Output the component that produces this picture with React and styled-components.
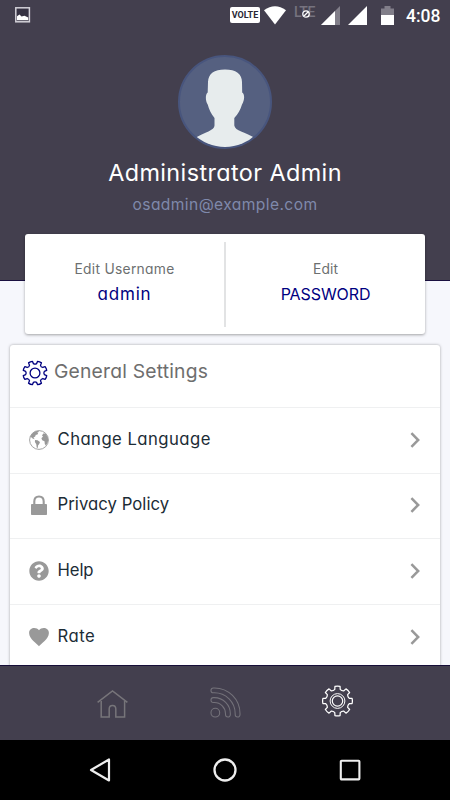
import React from "react";
import styled, { createGlobalStyle } from "styled-components";
import { FaQuestionCircle } from "react-icons/fa";

const rows = [
  { label: "Change Language", icon: <GlobeIcon />, spacing: 0.45 },
  { label: "Privacy Policy", icon: <LockIcon />, spacing: 0.05 },
  { label: "Help", icon: <FaQuestionCircle size={20} />, spacing: -0.1 },
  { label: "Rate", icon: <HeartIcon />, spacing: 0.5 },
];

// Outline of an eight-toothed gear centred on 0,0
function gearPath(outer, root, offset) {
  const point = (r, deg) => {
    const a = (deg * Math.PI) / 180;
    return `${(r * Math.cos(a)).toFixed(2)} ${(r * Math.sin(a)).toFixed(2)}`;
  };
  let d = "";
  for (let i = 0; i < 8; i++) {
    const a = i * 45 + offset;
    d += `${i === 0 ? "M" : "L"}${point(root, a - 13)}`;
    d += `L${point(outer, a - 10)}`;
    d += `Q${point(outer + 0.4, a)} ${point(outer, a + 10)}`;
    d += `L${point(root, a + 13)}`;
    d += `Q${point(root - 1.2, a + 22.5)} ${point(root, a + 32)}`;
  }
  return d + "Z";
}

function GlobeIcon() {
  return (
    <svg width="20" height="20" viewBox="0 0 20 20" fill="#999">
      <circle cx="10" cy="10" r="9.4" fill="none" stroke="#999" strokeWidth="0.9" />
      <path d="M1 7L3.5 3.2 6 1.4 9.2.8 10 2 8.3 2.6 9.2 3.8 8 4.8 6.8 4.8 6.2 6.5 4.5 7.6 5.7 9.3 3.6 8.6 2.2 7.2Z" />
      <path d="M6 10L8.5 10.3 11 12 10.2 14 9 15.5 8.8 18 7.7 17.5 7.3 14.3 5.9 12Z" />
      <path d="M13 5.6L14.3 3.4 16.5 3.6 18.8 7 19.2 10.5 18.2 13.5 16.8 15.6 15.8 14 15.5 11.2 13.2 10.3 12.4 8.2 14 6.5Z" />
    </svg>
  );
}

function LockIcon() {
  return (
    <svg width="20" height="20" viewBox="0 0 20 20">
      <path d="M5.3 10V6.5Q5.3 1.5 10 1.5T14.7 6.5V10" fill="none" stroke="#999" strokeWidth="2.1" />
      <rect x="2" y="9" width="16" height="11" rx="0.8" fill="#999" />
    </svg>
  );
}

function HeartIcon() {
  return (
    <svg width="20" height="20" viewBox="0 0 20 20">
      <path
        d="M10 19.2C8.2 16.8.1 12.2.1 6 .1.3 7.3-.5 10 3.2 12.7-.5 19.9.3 19.9 6 19.9 12.2 11.8 16.8 10 19.2Z"
        fill="#999"
      />
    </svg>
  );
}

function App() {
  return (
    <Screen>
      <GlobalStyle />
      <Header>
        <StatusBar>
          <svg width="16" height="16" viewBox="0 0 16 16">
            <rect x="0.8" y="0.8" width="13.6" height="14" fill="#353142" stroke="#d4d2d9" strokeWidth="1.5" />
            <path d="M2 13.2V9.2L4.5 7.4 6.5 9.4 9.5 8.8 13.2 10.5V13.2Z" fill="#fff" />
          </svg>
          <StatusIcons>
            <Volte>VOLTE</Volte>
            <WifiIcon width="22" height="19" viewBox="0 0 22 19">
              <path d="M0 4.2Q11-3.8 22 4.2L11 18.5Z" fill="#fff" />
            </WifiIcon>
            <Lte>
              LTE
              <NoData width="8" height="8" viewBox="0 0 8 8">
                <circle cx="4" cy="4" r="3.2" fill="#433f4e" stroke="#fff" strokeWidth="1.3" />
                <path d="M2 6L6 2" stroke="#fff" strokeWidth="1.2" />
              </NoData>
            </Lte>
            <SignalIcon width="19" height="19" viewBox="0 0 19 19">
              <path d="M19 0V19H0Z" fill="#817e89" />
              <path d="M14 5V19H0Z" fill="#fff" />
            </SignalIcon>
            <SecondSignal width="19" height="19" viewBox="0 0 19 19">
              <path d="M19 0V19H0Z" fill="#fff" />
            </SecondSignal>
            <BatteryIcon width="13" height="19" viewBox="0 0 13 19">
              <path d="M0 2.5H3.5V0H9.5V2.5H13V9H0Z" fill="#817e89" />
              <path d="M0 9H13V19H0Z" fill="#fff" />
            </BatteryIcon>
            <Clock>4:08</Clock>
          </StatusIcons>
        </StatusBar>
        <Avatar viewBox="0 0 94 94">
          <defs>
            <clipPath id="face">
              <circle cx="47" cy="47" r="45" />
            </clipPath>
          </defs>
          <circle cx="47" cy="47" r="46" fill="#556080" stroke="#48557d" strokeWidth="2" />
          <path
            clipPath="url(#face)"
            d="M47 14.5C58 14.5 64 19 64 27L64.2 37.5C66.8 39 66.8 45 64 49.5 62.5 55 60 59 56.3 63V70.5C57 76 67 77 77 83L76 94H18L17 83C27 77 36.5 75.5 36.5 70.5V63C33 59 31 54 29.7 49.5 27 45 27.5 39 29.7 37.5L30 27C30.5 18.5 36 14.5 47 14.5Z"
            fill="#e7eced"
          />
        </Avatar>
        <Name>Administrator Admin</Name>
        <Email>osadmin@example.com</Email>
      </Header>

      <Content>
        <AccountCard>
          <AccountCell>
            <CellLabel $spacing={0.3}>Edit Username</CellLabel>
            <CellValue $size={17} $spacing={0.8}>admin</CellValue>
          </AccountCell>
          <Divider />
          <AccountCell>
            <CellLabel $spacing={0.1}>Edit</CellLabel>
            <CellValue $size={16} $spacing={-0.1}>PASSWORD</CellValue>
          </AccountCell>
        </AccountCard>

        <SettingsCard>
          <SettingsHeading>
            <svg width="26" height="26" viewBox="-13 -13 26 26" fill="none" stroke="#000080" strokeWidth="1.3" strokeLinejoin="round">
              <path d={gearPath(12, 9.5, 22.5)} />
              <circle r="4.9" />
            </svg>
            <HeadingText>General Settings</HeadingText>
          </SettingsHeading>
          {rows.map((row) => (
            <SettingsRow key={row.label}>
              <RowIcon>{row.icon}</RowIcon>
              <RowText $spacing={row.spacing}>{row.label}</RowText>
              <svg width="10" height="16" viewBox="0 0 10 16" fill="none" stroke="#999" strokeWidth="2.5">
                <path d="M1.4 1.2L8.2 8 1.4 14.8" />
              </svg>
            </SettingsRow>
          ))}
        </SettingsCard>
      </Content>

      <TabBar>
        <Tab $offset={2}>
          <svg width="32" height="30" viewBox="0 0 32 30" fill="none" stroke="#77757a" strokeWidth="1.5">
            <path d="M0.6 13.4L15.5 2 30.4 13.4" />
            <path d="M4.2 12V28H12.2V20Q12.2 16.5 15.5 16.5T18.8 20V28H27.6V12" />
          </svg>
        </Tab>
        <Tab $offset={0}>
          <svg width="31" height="31" viewBox="0 0 32 32" fill="none" stroke="#74727a" strokeWidth="1.1">
            <circle cx="5.5" cy="26.5" r="4.5" />
            <path d="M3.5 1H4.5A26.5 26.5 0 0 1 31 27.5V28.5A2.5 2.5 0 0 1 26 28.5V27.5A21.5 21.5 0 0 0 4.5 6H3.5A2.5 2.5 0 0 1 3.5 1Z" />
            <path d="M3.5 11H4.5A16.5 16.5 0 0 1 21 27.5V28.5A2.5 2.5 0 0 1 16 28.5V27.5A11.5 11.5 0 0 0 4.5 16H3.5A2.5 2.5 0 0 1 3.5 11Z" />
          </svg>
        </Tab>
        <Tab $offset={-2}>
          <svg width="32" height="32" viewBox="-15.5 -16 32 32" fill="none" stroke="#fff" strokeWidth="1.25" strokeLinejoin="round">
            <path d={gearPath(14.8, 12, 0)} />
            <circle r="7.4" strokeWidth="1" />
            <circle r="5.2" strokeWidth="1.2" />
          </svg>
        </Tab>
      </TabBar>

      <SystemBar>
        <svg width="24" height="26" viewBox="0 0 24 26" fill="none" stroke="#eee" strokeWidth="2.2" strokeLinejoin="round">
          <path d="M3 13L21 2.5V23.5Z" />
        </svg>
        <svg width="24" height="24" viewBox="0 0 24 24" fill="none" stroke="#eee" strokeWidth="2.3">
          <circle cx="12" cy="12" r="10.5" />
        </svg>
        <svg width="24" height="24" viewBox="0 0 24 24" fill="none" stroke="#eee" strokeWidth="2.1">
          <rect x="2.8" y="2.8" width="18.6" height="18.6" rx="0.8" />
        </svg>
      </SystemBar>
    </Screen>
  );
}

export default App;

const GlobalStyle = createGlobalStyle`
  * {
    box-sizing: border-box;
  }
  body {
    margin: 0;
    overflow: hidden;
    font-family: "Inter", sans-serif;
    font-feature-settings: "cv11";
  }
  svg {
    display: block;
    flex-shrink: 0;
  }
`;

const Screen = styled.div`
  display: flex;
  flex-direction: column;
  width: 450px;
  height: 800px;
  background-color: #f6f7fc;
`;

const Header = styled.header`
  display: flex;
  flex-direction: column;
  align-items: center;
  flex-shrink: 0;
  height: 281px;
  background-color: #433f4e;
  border-bottom: 1px solid #1a1040;
`;

const StatusBar = styled.div`
  display: flex;
  justify-content: space-between;
  align-items: flex-start;
  width: 100%;
  height: 55px;
  padding: 7px 9px 0 15px;
`;

const StatusIcons = styled.div`
  display: flex;
  align-items: flex-start;
  margin-top: -1px;
`;

const Volte = styled.span`
  width: 30px;
  height: 16px;
  margin-top: 1px;
  border-radius: 2px;
  background-color: white;
  color: #2a2735;
  font-family: "Roboto", sans-serif;
  font-size: 9px;
  font-weight: 700;
  line-height: 16px;
  text-align: center;
`;

const WifiIcon = styled.svg`
  margin-left: 4px;
`;

const Lte = styled.span`
  position: relative;
  width: 22px;
  margin-left: 8px;
  color: #76737f;
  font-family: "Roboto", sans-serif;
  font-size: 14px;
  font-weight: 500;
  line-height: 12px;
  letter-spacing: -0.5px;
`;

const NoData = styled.svg`
  position: absolute;
  left: 8px;
  top: 4px;
`;

const SignalIcon = styled.svg`
  margin-left: 5px;
`;

const SecondSignal = styled.svg`
  margin-left: 8px;
`;

const BatteryIcon = styled.svg`
  margin-left: 14px;
`;

const Clock = styled.span`
  width: 35px;
  margin-left: 12px;
  color: white;
  font-family: "Roboto", sans-serif;
  font-size: 17.5px;
  font-weight: 500;
  line-height: 20px;
`;

const Avatar = styled.svg`
  width: 94px;
  height: 94px;
`;

const Name = styled.h1`
  margin: 9px 0 0;
  color: white;
  font-size: 23.4px;
  font-weight: 370;
  line-height: 30px;
  letter-spacing: 0.4px;
`;

const Email = styled.p`
  margin: 7px 0 0;
  color: #7f89ab;
  font-size: 15.6px;
  line-height: 20px;
  letter-spacing: 0.4px;
`;

const Content = styled.main`
  flex: 1;
  min-height: 0;
  padding: 0 10px;
`;

const AccountCard = styled.section`
  display: flex;
  align-items: flex-start;
  position: relative;
  height: 100px;
  margin: -47px 15px 0;
  border-radius: 3px;
  background-color: white;
  box-shadow: 0 1px 3px rgba(0, 0, 0, 0.35);
`;

const AccountCell = styled.div`
  flex: 1;
  padding-top: 25px;
  font-weight: 370;
  text-align: center;
`;

const Divider = styled.div`
  width: 2px;
  height: 85px;
  margin-top: 8px;
  background-color: #e2e3e4;
`;

const CellLabel = styled.p`
  margin: 0;
  color: #6c6f70;
  font-size: 13.8px;
  line-height: 20px;
  letter-spacing: ${(props) => props.$spacing}px;
`;

const CellValue = styled.p`
  margin: 4px 0 0;
  color: #000080;
  font-size: ${(props) => props.$size}px;
  line-height: 22px;
  letter-spacing: ${(props) => props.$spacing}px;
`;

const SettingsCard = styled.section`
  height: 340px;
  margin-top: 11px;
  border-radius: 3px;
  background-color: white;
  box-shadow: 0 0 3px rgba(0, 0, 0, 0.35);
`;

const SettingsHeading = styled.div`
  display: flex;
  height: 62px;
  padding: 15px 0 0 12px;
`;

const HeadingText = styled.h2`
  margin: -1px 0 0 6px;
  color: #6e6e6e;
  font-size: 19.3px;
  font-weight: 370;
  line-height: 25px;
  letter-spacing: 0.2px;
`;

const SettingsRow = styled.div`
  display: flex;
  align-items: center;
  height: 65.6px;
  padding: 0 20px 1px 18.5px;
  border-top: 1px solid #eff0f1;
`;

const RowIcon = styled.div`
  margin-right: 9px;
  color: #999;
`;

const RowText = styled.span`
  flex: 1;
  margin-top: -2px;
  color: #1c2c36;
  font-size: 16.7px;
  font-weight: 370;
  letter-spacing: ${(props) => props.$spacing}px;
`;

const TabBar = styled.nav`
  display: flex;
  justify-content: center;
  position: relative;
  height: 75px;
  padding-top: 21px;
  border-top: 1px solid #160e38;
  background-color: #433f4e;
`;

const Tab = styled.div`
  display: flex;
  justify-content: center;
  width: 112.5px;
  margin-top: ${(props) => props.$offset}px;
`;

const SystemBar = styled.footer`
  display: flex;
  justify-content: space-between;
  align-items: center;
  height: 60px;
  padding: 0 88px;
  background-color: black;
`;
